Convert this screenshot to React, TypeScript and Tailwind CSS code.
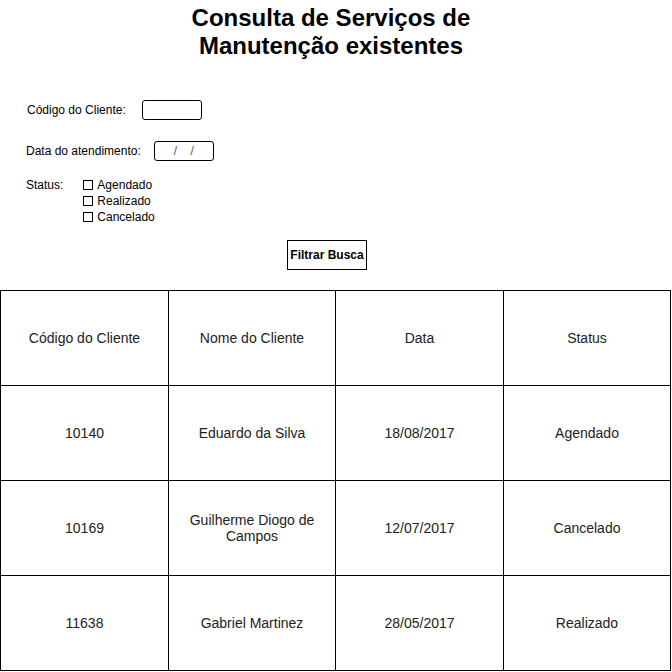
const ROWS = [
  { codigo: "10140", nome: "Eduardo da Silva", data: "18/08/2017", status: "Agendado" },
  { codigo: "10169", nome: "Guilherme Diogo de Campos", data: "12/07/2017", status: "Cancelado" },
  { codigo: "11638", nome: "Gabriel Martinez", data: "28/05/2017", status: "Realizado" },
];

const HEADERS = ["Código do Cliente", "Nome do Cliente", "Data", "Status"];

const STATUS_OPTIONS = ["Agendado", "Realizado", "Cancelado"];

function Cell({ children }: { children: React.ReactNode }) {
  return (
    <div className="flex h-[95px] items-center justify-center border-b border-r border-black px-5 text-center text-[14px] leading-[16px] text-[#222]">
      {children}
    </div>
  );
}

export default function App() {
  return (
    <div className="min-h-screen w-full bg-white font-['Liberation_Sans',Arial,sans-serif] text-black">
      <h1 className="w-[662px] pt-[4px] text-center text-[24px] font-bold leading-[28px]">
        Consulta de Serviços de
        <br />
        Manutenção existentes
      </h1>

      <div className="mt-[40px] flex h-[20px] items-center gap-[16px] pl-[27px] text-[12px]">
        <span>Código do Cliente:</span>
        <div className="h-[20px] w-[60px] rounded-[3px] border border-black" />
      </div>

      <div className="mt-[21px] flex h-[20px] items-center gap-[13px] pl-[26px] text-[12px]">
        <span>Data do atendimento:</span>
        <div className="flex h-[20px] w-[60px] items-center justify-center whitespace-pre rounded-[3px] border border-black text-[12px] text-[#555]">
          {"/    /"}
        </div>
      </div>

      <div className="mt-[16px] flex gap-[20px] pl-[26px] text-[12px] leading-[16px]">
        <span>Status:</span>
        <div className="flex flex-col">
          {STATUS_OPTIONS.map((opt) => (
            <label key={opt} className="flex items-center gap-[4px]">
              <span className="h-[10px] w-[10px] border border-black" />
              <span>{opt}</span>
            </label>
          ))}
        </div>
      </div>

      <button
        type="button"
        className="ml-[287px] mt-[15px] flex h-[30px] w-[80px] items-center justify-center border border-black bg-white text-[12px] font-bold"
      >
        Filtrar Busca
      </button>

      <div className="mt-[20px] grid w-[671px] grid-cols-[168px_167px_168px_167px] border-l border-t border-black">
        {HEADERS.map((h) => (
          <Cell key={h}>{h}</Cell>
        ))}
        {ROWS.map((r) => (
          <div key={r.codigo} className="contents">
            <Cell>{r.codigo}</Cell>
            <Cell>{r.nome}</Cell>
            <Cell>{r.data}</Cell>
            <Cell>{r.status}</Cell>
          </div>
        ))}
      </div>
    </div>
  );
}
